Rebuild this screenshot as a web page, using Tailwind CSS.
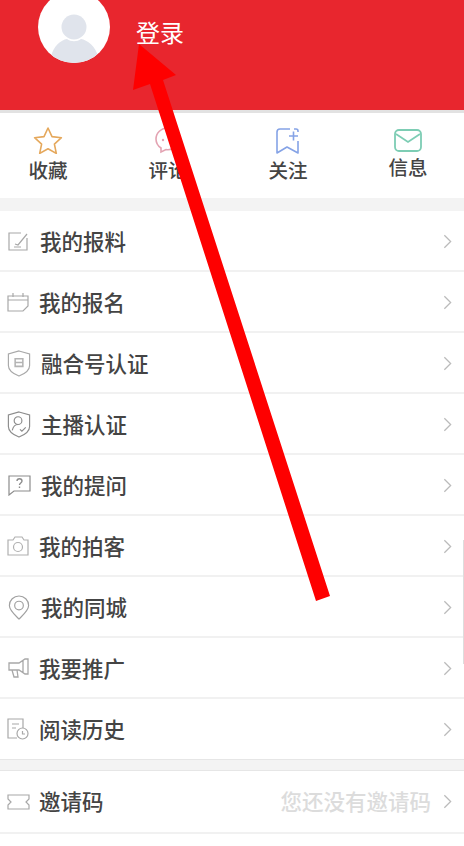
<!DOCTYPE html>
<html lang="zh-CN">
<head>
  <meta charset="UTF-8" />
  <meta name="viewport" content="width=device-width, initial-scale=1.0">
  <title>我的</title>
  <script src="https://cdn.jsdelivr.net/npm/@tailwindcss/browser@4"></script>
</head>
<body class="bg-white font-['Noto_Sans_CJK_SC',sans-serif]">
<div class="relative w-[464px] h-[846px] overflow-hidden">

  <!-- Header -->
  <div class="h-[110px] bg-[#e8262e] flex items-start pl-[38px]">
    <div class="w-[72px] h-[72px] -mt-[9px] rounded-full bg-white overflow-hidden shrink-0">
      <svg viewBox="0 0 72 72" class="w-full h-full">
        <circle cx="36" cy="36" r="12.5" fill="#e0e4ec"/>
        <path d="M13 66c2-11 10-17 16-18 4 3 10 3 14 0 6 1 15 7 17 18l-12 8H24z" fill="#e0e4ec"/>
      </svg>
    </div>
    <span class="ml-[26px] mt-[14px] text-[24px] leading-[36px] text-white">登录</span>
  </div>
  <div class="h-[3px] bg-[#e2e2e2]"></div>

  <!-- Tabs -->
  <div class="h-[85px] -ml-[12px] grid grid-cols-[120px_120px_120px_120px] text-[19.5px] leading-[26px] font-medium text-[#444]">
    <div class="flex flex-col items-center pt-[13px]">
      <svg viewBox="0 0 30 28" class="w-[30px] h-[28px]"><path d="M15 2l4 8.600 9.400 1.100-7 6.400 1.900 9.300L15 22.700l-8.300 4.700 1.900-9.300-7-6.400 9.400-1.100z" fill="none" stroke="#e5a85c" stroke-width="1.600" stroke-linejoin="round"/></svg>
      <span class="mt-[3px]">收藏</span>
    </div>
    <div class="flex flex-col items-center pt-[13px]">
      <svg viewBox="0 0 30 28" class="w-[30px] h-[28px]"><path d="M15 2C8 2 3 7 3 13c0 4 2 7 5 9v4l5-2.500c1 .2 1.500.2 2 .2 7 0 12-5 12-11S22 2 15 2z" fill="none" stroke="#e3a3b2" stroke-width="1.600"/><circle cx="10" cy="14" r="1.200" fill="#e3a3b2"/><circle cx="20" cy="14" r="1.200" fill="#e3a3b2"/></svg>
      <span class="mt-[3px]">评论</span>
    </div>
    <div class="flex flex-col items-center pt-[13px]">
      <svg viewBox="0 0 30 28" class="w-[30px] h-[28px]"><path d="M17 3H7a3 3 0 0 0-3 3v21l10-6 11 6V15" fill="none" stroke="#85a3e6" stroke-width="1.600" stroke-linejoin="round"/><path d="M21 3h2a2 2 0 0 1 2 2v1M16 10h9M20.500 5.500v9" fill="none" stroke="#85a3e6" stroke-width="1.600"/></svg>
      <span class="mt-[3px]">关注</span>
    </div>
    <div class="flex flex-col items-center pt-[13px]">
      <svg viewBox="0 0 30 28" class="w-[30px] h-[28px]"><rect x="2" y="4" width="26" height="21" rx="4" fill="none" stroke="#7dcdb4" stroke-width="1.800"/><path d="M3 8l12 8 12-8" fill="none" stroke="#7dcdb4" stroke-width="1.800"/></svg>
      <span>信息</span>
    </div>
  </div>
  <div class="h-[13px] bg-[#f3f3f3]"></div>

  <!-- Menu -->
  <div class="text-[21.5px] font-medium text-[#444]">
    <div class="h-[61px] flex items-center border-b-2 border-[#f1f1f1] pl-[7px] pr-[12px] pt-[1px]">
      <svg viewBox="0 0 22 22" class="w-[22px] h-[22px] shrink-0" fill="none" stroke="#a8a8a8" stroke-width="1.200"><path d="M14 3H2v17h18V8"/><path d="M8 14l3 1 9-11M7 17h7"/></svg>
      <span class="ml-[11px] flex-1">我的报料</span>
      <svg viewBox="0 0 10 16" class="w-[9px] h-[15px]"><path d="M1.500 1l7 7-7 7" fill="none" stroke="#bbb" stroke-width="1.400"/></svg>
    </div>
    <div class="h-[61px] flex items-center border-b-2 border-[#f1f1f1] pl-[7px] pr-[12px] pt-[1px]">
      <svg viewBox="0 0 22 22" class="w-[22px] h-[22px] shrink-0" fill="none" stroke="#a8a8a8" stroke-width="1.200"><path d="M1 5h20v10l-5 5H1zM1 9h20M6 2v4M16 2v4"/></svg>
      <span class="ml-[10px] flex-1">我的报名</span>
      <svg viewBox="0 0 10 16" class="w-[9px] h-[15px]"><path d="M1.500 1l7 7-7 7" fill="none" stroke="#bbb" stroke-width="1.400"/></svg>
    </div>
    <div class="h-[61px] flex items-center border-b-2 border-[#f1f1f1] pl-[7px] pr-[12px] pt-[1px]">
      <svg viewBox="0 0 24 28" class="w-[24px] h-[27px] shrink-0" fill="none" stroke="#a8a8a8" stroke-width="1.200"><path d="M12 1l11 3v12c0 5-6 9-11 11C7 25 1 21 1 16V4z"/><path d="M8 9h8v8H8zM8 13h8" stroke="#b4b4b4" stroke-width="1.600"/></svg>
      <span class="ml-[10px] flex-1">融合号认证</span>
      <svg viewBox="0 0 10 16" class="w-[9px] h-[15px]"><path d="M1.500 1l7 7-7 7" fill="none" stroke="#bbb" stroke-width="1.400"/></svg>
    </div>
    <div class="h-[61px] flex items-center border-b-2 border-[#f1f1f1] pl-[7px] pr-[12px] pt-[1px]">
      <svg viewBox="0 0 24 28" class="w-[24px] h-[27px] shrink-0" fill="none" stroke="#8c8c8c" stroke-width="1.200"><path d="M12 1l11 3v12c0 5-6 9-11 11C7 25 1 21 1 16V4z"/><circle cx="11" cy="10" r="4"/><path d="M5 20c1-4 3-6 6-6M13 19l2 2 4-4"/></svg>
      <span class="ml-[10px] flex-1">主播认证</span>
      <svg viewBox="0 0 10 16" class="w-[9px] h-[15px]"><path d="M1.500 1l7 7-7 7" fill="none" stroke="#bbb" stroke-width="1.400"/></svg>
    </div>
    <div class="h-[61px] flex items-center border-b-2 border-[#f1f1f1] pl-[7px] pr-[12px] pt-[1px]">
      <svg viewBox="0 0 24 22" class="w-[24px] h-[22px] shrink-0" fill="none" stroke="#8c8c8c" stroke-width="1.200"><path d="M2 2h21v15H7l-5 4z"/><path d="M10 7c0-3 5-3 5 0 0 2-2.500 2-2.500 4M12.500 12.500v1.500" stroke-width="1.400"/></svg>
      <span class="ml-[10px] flex-1">我的提问</span>
      <svg viewBox="0 0 10 16" class="w-[9px] h-[15px]"><path d="M1.500 1l7 7-7 7" fill="none" stroke="#bbb" stroke-width="1.400"/></svg>
    </div>
    <div class="h-[61px] flex items-center border-b-2 border-[#f1f1f1] pl-[7px] pr-[12px] pt-[1px]">
      <svg viewBox="0 0 22 20" class="w-[22px] h-[20px] shrink-0" fill="none" stroke="#b0b0b0" stroke-width="1.200"><path d="M1 4h5l2-3h7l2 3h4v15H1z"/><circle cx="11" cy="11" r="4.500"/></svg>
      <span class="ml-[10px] flex-1">我的拍客</span>
      <svg viewBox="0 0 10 16" class="w-[9px] h-[15px]"><path d="M1.500 1l7 7-7 7" fill="none" stroke="#bbb" stroke-width="1.400"/></svg>
    </div>
    <div class="h-[61px] flex items-center border-b-2 border-[#f1f1f1] pl-[8px] pr-[12px] pt-[1px]">
      <svg viewBox="0 0 22 26" class="w-[22px] h-[25px] shrink-0" fill="none" stroke="#a0a0a0" stroke-width="1.200"><path d="M11 25C6 20 1 16 1 11a10 10 0 0 1 20 0c0 5-5 9-10 14z"/><circle cx="11" cy="11" r="4.500"/></svg>
      <span class="ml-[11px] flex-1">我的同城</span>
      <svg viewBox="0 0 10 16" class="w-[9px] h-[15px]"><path d="M1.500 1l7 7-7 7" fill="none" stroke="#bbb" stroke-width="1.400"/></svg>
    </div>
    <div class="h-[61px] flex items-center border-b-2 border-[#f1f1f1] pl-[8px] pr-[12px] pt-[1px]">
      <svg viewBox="0 0 21 20" class="w-[21px] h-[20px] shrink-0" fill="none" stroke="#a8a8a8" stroke-width="1.300"><path d="M1 5h10l6-4h3v15h-3l-6-4H1zM15 2.500v12M4 12l2 7h4l-1-7"/></svg>
      <span class="ml-[10px] flex-1">我要推广</span>
      <svg viewBox="0 0 10 16" class="w-[9px] h-[15px]"><path d="M1.500 1l7 7-7 7" fill="none" stroke="#bbb" stroke-width="1.400"/></svg>
    </div>
    <div class="h-[60px] flex items-center pl-[7px] pr-[12px]">
      <svg viewBox="0 0 22 22" class="w-[22px] h-[22px] shrink-0" fill="none" stroke="#a8a8a8" stroke-width="1.200"><path d="M16 10V1H1v19h9M5 6h7M5 10h4"/><circle cx="15.500" cy="15.500" r="5.500"/><path d="M15.500 13v3h2.500"/></svg>
      <span class="ml-[10px] flex-1">阅读历史</span>
      <svg viewBox="0 0 10 16" class="w-[9px] h-[15px]"><path d="M1.500 1l7 7-7 7" fill="none" stroke="#bbb" stroke-width="1.400"/></svg>
    </div>
    <div class="h-[12px] bg-[#f3f3f3] border-y border-[#e6e6e6]"></div>
    <div class="h-[63px] flex items-center border-b-2 border-[#f1f1f1] pl-[7px] pr-[12px]">
      <svg viewBox="0 0 23 16" class="w-[23px] h-[16px] shrink-0" fill="none" stroke="#a8a8a8" stroke-width="1.200"><path d="M1 1h21v4l-3 3 3 3v4H1v-4l3-3-3-3z"/></svg>
      <span class="ml-[9px] flex-1">邀请码</span>
      <span class="text-[#dcdcdc] mr-[12px]">您还没有邀请码</span>
      <svg viewBox="0 0 10 16" class="w-[9px] h-[15px]"><path d="M1.500 1l7 7-7 7" fill="none" stroke="#bbb" stroke-width="1.400"/></svg>
    </div>
  </div>

  <!-- Scrollbar -->
  <div class="absolute right-0 top-[540px] w-[1px] h-[124px] bg-[#dddddd]"></div>

  <!-- Red annotation arrow -->
  <svg class="absolute inset-0 w-[464px] h-[846px] pointer-events-none" viewBox="0 0 464 846">
    <path d="M139 44L133 90L150 84L316 601L330 596L163 80L176 75Z" fill="#fe0000"/>
  </svg>
</div>
</body>
</html>
